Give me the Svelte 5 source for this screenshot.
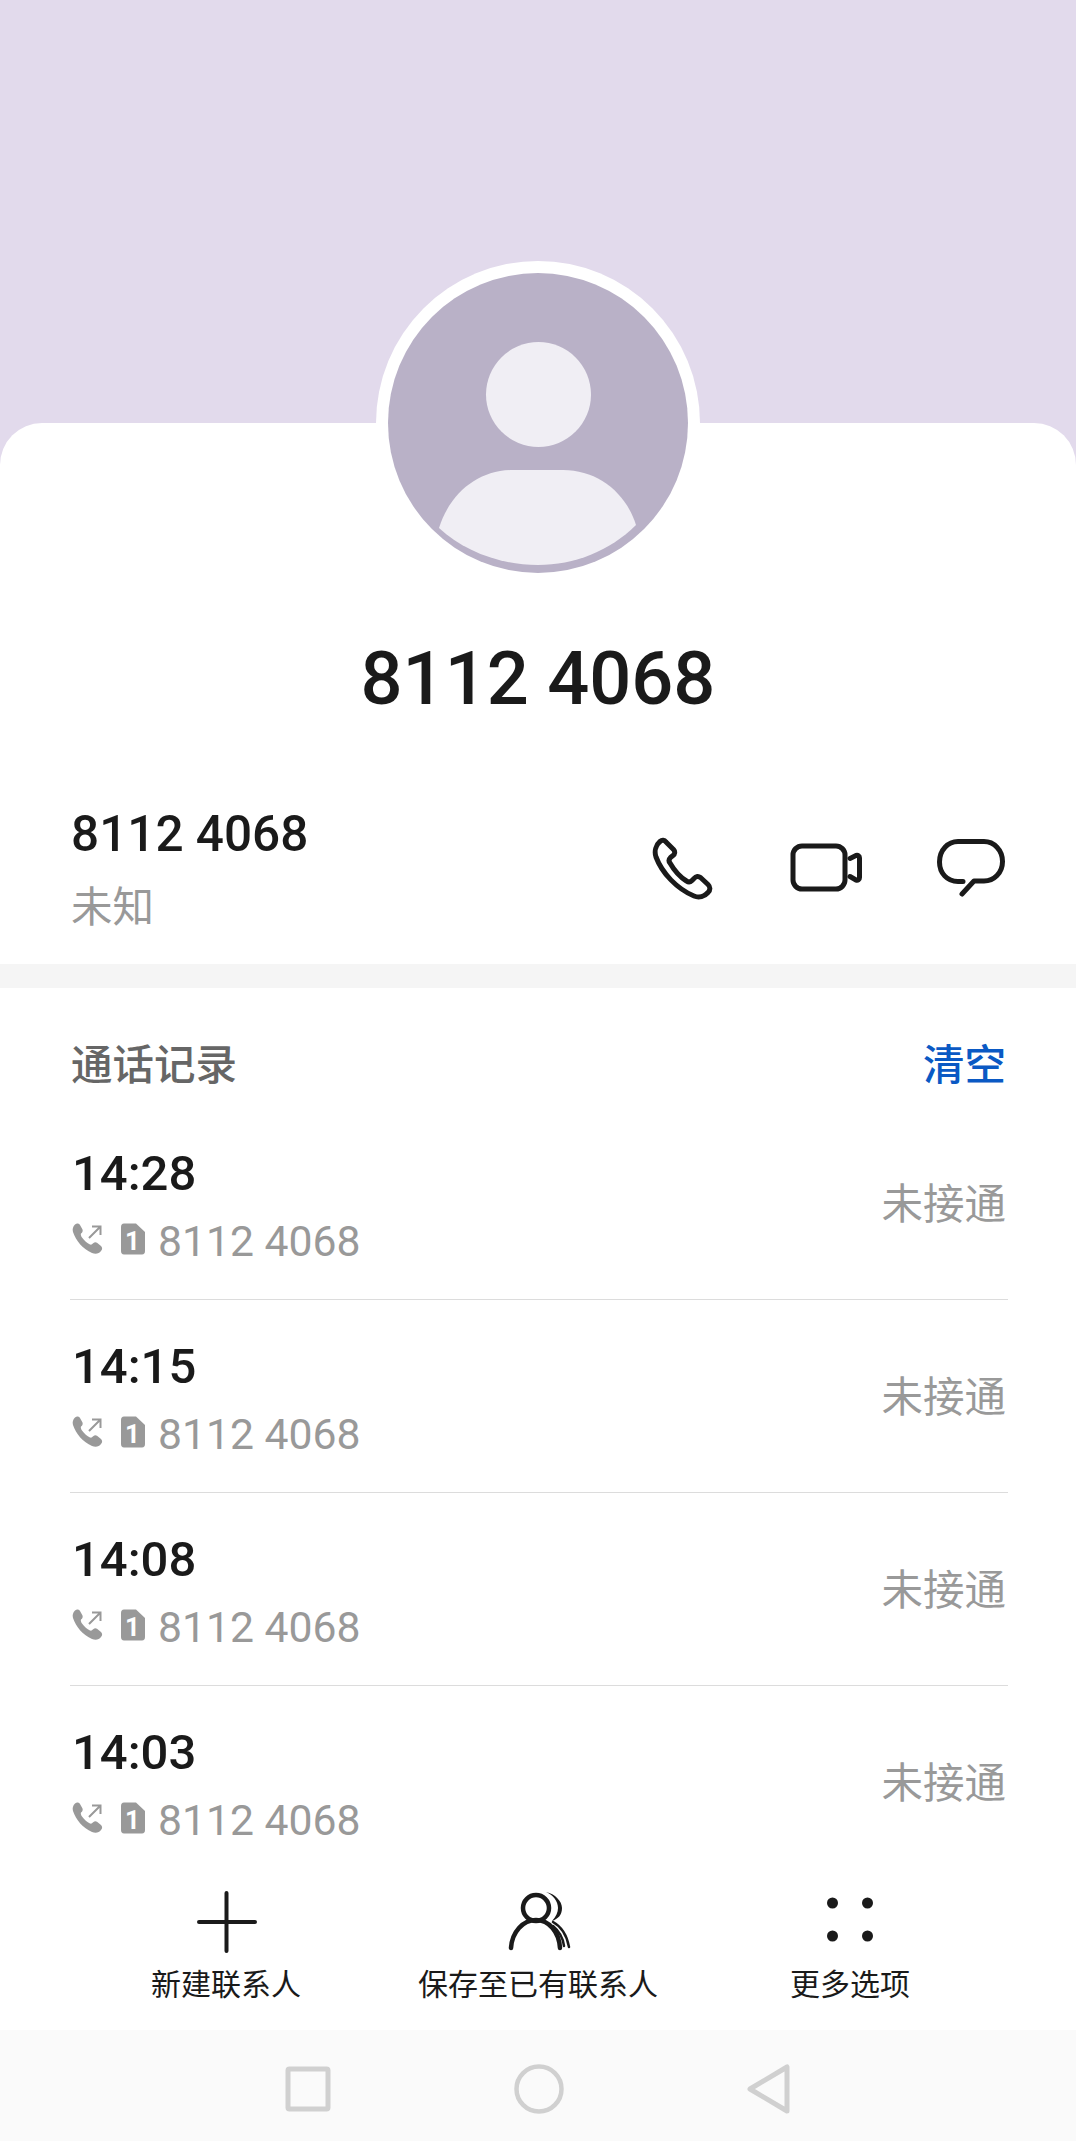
<script lang="ts">
  const calls = ["14:28", "14:15", "14:08", "14:03"];
  const number = "8112 4068";
</script>

{#snippet callOutIcon()}
  <svg class="mini" width="32" height="32" viewBox="0 0 32 32" fill="none">
    <path
      d="M3 1.5 C5 0 7 .5 8 2 L10.5 6.5 C11 8 10.5 9.5 9 10.5 C8.5 11.5 9 13 10 14.5 C12.5 18 15 20 18 21.5 C19.5 22 20.5 21 21.5 20 C22.5 19 24 19 25 19.8 L29 23 C30.5 24.5 30.5 26.5 29 28 C27 30.5 24 31.5 20 30 C11 26 4 18 1 9 C.2 6 1 3.5 3 1.5Z"
      fill="#999"
    />
    <path d="M17 15 L28 4 M20 3.5 H28.5 V12" stroke="#999" stroke-width="2" />
  </svg>
{/snippet}

{#snippet simIcon()}
  <svg class="mini sim" width="26" height="32" viewBox="0 0 26 32">
    <path
      d="M4 .5 H16 L25 9 V28 C25 30 24 31.5 22 31.5 H4 C2 31.5 1 30 1 28 V4 C1 2 2 .5 4 .5Z"
      fill="#999"
    />
    <text x="12.5" y="27" text-anchor="middle" class="sim-num">1</text>
  </svg>
{/snippet}

<div class="page">
  <div class="card">
    <div class="avatar">
      <div class="avatar-inner">
        <div class="head"></div>
        <svg class="body" width="300" height="300" viewBox="0 0 300 300">
          <path
            d="M51 255 C62 220 90 197 125 197 H175 C210 197 238 220 248 252 C222 278 186 292 150 292 C112 292 76 278 51 255 Z"
            fill="#f0eef4"
          />
        </svg>
      </div>
    </div>

    <h1 class="title">{number}</h1>

    <div class="contact">
      <div class="contact-info">
        <div class="contact-number">{number}</div>
        <div class="contact-label">未知</div>
      </div>
      <div class="contact-actions">
        <svg width="64" height="64" viewBox="0 0 64 64" fill="none" stroke="#1a1a1a" stroke-width="5">
          <path
            stroke-linejoin="round"
            d="M9 5.5 C11 3.8 13.5 4 15 6 L22.5 13.5 C24.3 15.5 24 18 22 19.5 L19.5 21.5 C18 23 17.5 25 19 27 C23 34 29 41 35.5 45 C37.5 46.5 39.5 46 41 44.5 L43 42.5 C45 40 47.5 40 49.5 41.5 L57 48.5 C59.5 51 59.5 54 57 56.5 C53.5 60.5 48 62 43 60 C26 53 11 37 5 21 C3 15 5 9 9 5.5Z"
          />
        </svg>
        <svg width="72" height="50" viewBox="0 0 72 50" fill="none" stroke="#1a1a1a" stroke-width="5" stroke-linecap="round" stroke-linejoin="round">
          <rect x="3" y="3" width="52" height="43" rx="9" />
          <path d="M60 15.5 L66 12.5 C68 12 69.5 13 69.5 15 V34.5 C69.5 36.5 68 37.5 66 37 L60 33.5" />
        </svg>
        <svg width="68" height="58" viewBox="0 0 68 58" fill="none" stroke="#1a1a1a" stroke-width="5" stroke-linecap="round" stroke-linejoin="round">
          <path d="M26 42.5 H21 C10 42.5 2.5 34 2.5 23 C2.5 11 11 2.5 21 2.5 H47 C57 2.5 65.5 11 65.5 22.5 C65.5 34 57 42 47 42 H37 L25 55" />
        </svg>
      </div>
    </div>

    <div class="band"></div>

    <div class="history-head">
      <span class="history-title">通话记录</span>
      <span class="history-clear">清空</span>
    </div>

    <div class="list">
      {#each calls as time}
        <div class="row">
          <div class="row-main">
            <div class="row-time">{time}</div>
            <div class="row-sub">
              {@render callOutIcon()}
              {@render simIcon()}
              <span>{number}</span>
            </div>
          </div>
          <span class="row-status">未接通</span>
        </div>
      {/each}
    </div>

    <div class="actions">
      <div class="action">
        <svg width="64" height="64" viewBox="0 0 64 64" fill="none" stroke="#1a1a1a" stroke-width="4" stroke-linecap="round">
          <path d="M32.5 3 V61 M5 32 H31 M35 32 H61" />
        </svg>
        <span>新建联系人</span>
      </div>
      <div class="action">
        <svg width="66" height="64" viewBox="0 0 66 64" fill="none" stroke="#1a1a1a" stroke-width="4.5" stroke-linecap="round">
          <circle cx="31" cy="18" r="13" />
          <path d="M6 58 C7 42 18 30 31 30 C44 30 54 42 55 58" />
          <path stroke="none" fill="#1a1a1a" d="M41 2 C50 4 57 11 57 18 C57 25 53 29 47 31 C51 27 53 22 53 18 C53 11 48 5 41 2Z" />
          <path stroke-width="2.5" d="M48 32 C57 37 62 46 64 57 M48 36 C54 41 58 48 59 56" />
        </svg>
        <span>保存至已有联系人</span>
      </div>
      <div class="action">
        <svg width="64" height="64" viewBox="0 0 64 64" fill="#1a1a1a">
          <circle cx="14.5" cy="13" r="5.5" />
          <circle cx="49.5" cy="13" r="5.5" />
          <circle cx="14.5" cy="46" r="5.5" />
          <circle cx="49.5" cy="46" r="5.5" />
        </svg>
        <span>更多选项</span>
      </div>
    </div>
  </div>

  <div class="nav">
    <svg width="46" height="46" viewBox="0 0 46 46" fill="none" stroke="#d0d0d0" stroke-width="5">
      <rect x="3" y="3" width="40" height="40" rx="1.5" />
    </svg>
    <svg width="50" height="50" viewBox="0 0 50 50" fill="none" stroke="#d0d0d0" stroke-width="4.5">
      <circle cx="25" cy="25" r="22.5" />
    </svg>
    <svg width="44" height="50" viewBox="0 0 44 50" fill="none" stroke="#d0d0d0" stroke-width="5" stroke-linejoin="round">
      <path d="M3 25 L40 3 V47 Z" />
    </svg>
  </div>
</div>

<style>
  :global(body) {
    margin: 0;
    background: #fff;
  }

  .page {
    width: 1076px;
    height: 2141px;
    display: flex;
    flex-direction: column;
    overflow: hidden;
    background: #e2daec;
    padding-top: 423px;
    box-sizing: border-box;
    font-family: Roboto, "Noto Sans CJK SC", sans-serif;
    color: #1a1a1a;
  }

  .card {
    flex: 1;
    min-height: 0;
    display: flex;
    flex-direction: column;
    background: #fff;
    border-radius: 42px 42px 0 0;
  }

  .avatar {
    width: 324px;
    height: 324px;
    margin: -162px auto 0;
    padding: 12px;
    box-sizing: border-box;
    border-radius: 50%;
    background: #fff;
    flex: none;
  }

  .avatar-inner {
    position: relative;
    height: 100%;
    border-radius: 50%;
    background: #b9b1c7;
    overflow: hidden;
  }

  .head {
    position: absolute;
    left: 98px;
    top: 69px;
    width: 105px;
    height: 105px;
    border-radius: 50%;
    background: #f0eef4;
  }

  .body {
    position: absolute;
    left: 0;
    top: 0;
  }

  .title {
    margin: 49px 0 0;
    font-size: 74px;
    line-height: 90px;
    font-weight: 500;
    text-align: center;
  }

  .contact {
    flex: none;
    height: 160px;
    margin-top: 80px;
    padding: 0 71px 0 71px;
    display: flex;
    justify-content: space-between;
  }

  .contact-number {
    font-size: 49.5px;
    line-height: 60px;
    font-weight: 500;
  }

  .contact-label {
    margin-top: 14px;
    font-size: 41.5px;
    line-height: 60px;
    color: #999;
  }

  .contact-actions {
    display: flex;
    align-items: center;
    gap: 75px;
    height: 128px;
  }

  .band {
    flex: none;
    height: 24px;
    background: #f5f5f5;
  }

  .history-head {
    flex: none;
    height: 119px;
    padding: 29px 70px 0 71px;
    display: flex;
    justify-content: space-between;
    align-items: center;
    font-size: 41.5px;
    font-weight: 500;
    box-sizing: border-box;
  }

  .history-title {
    color: #666;
  }

  .history-clear {
    color: #0a59c4;
  }

  .list {
    flex: 1;
    min-height: 0;
    overflow: hidden;
    margin: 0 68px 0 70px;
  }

  .row {
    height: 193px;
    box-sizing: border-box;
    display: flex;
    justify-content: space-between;
    align-items: center;
    border-bottom: 1px solid #dcdcdc;
  }

  .row-main {
    padding-top: 9px;
    padding-left: 2px;
  }

  .row-time {
    font-size: 49px;
    line-height: 60px;
    font-weight: 500;
  }

  .row-sub {
    display: flex;
    align-items: center;
    margin-top: 7px;
    font-size: 42.7px;
    line-height: 60px;
    color: #999;
  }

  .mini {
    flex: none;
    margin-top: -4px;
  }

  .sim {
    margin-left: 16px;
    margin-right: 12px;
  }

  .sim-num {
    font-family: Roboto, sans-serif;
    font-size: 26px;
    font-weight: 700;
    fill: #fff;
  }

  .row-status {
    padding: 0 2px 4px 0;
    font-size: 41.5px;
    color: #999;
  }

  .actions {
    flex: none;
    height: 170px;
    display: grid;
    grid-template-columns: repeat(3, 312px);
    justify-content: center;
    background: #fff;
    padding-top: 30px;
    box-sizing: border-box;
  }

  .action {
    display: flex;
    flex-direction: column;
    align-items: center;
    gap: 10px;
    font-size: 30px;
    line-height: 42px;
  }

  .nav {
    flex: none;
    height: 111px;
    padding-top: 6px;
    box-sizing: border-box;
    background: #fafafa;
    display: flex;
    justify-content: center;
    align-items: center;
    gap: 183px;
  }
</style>
